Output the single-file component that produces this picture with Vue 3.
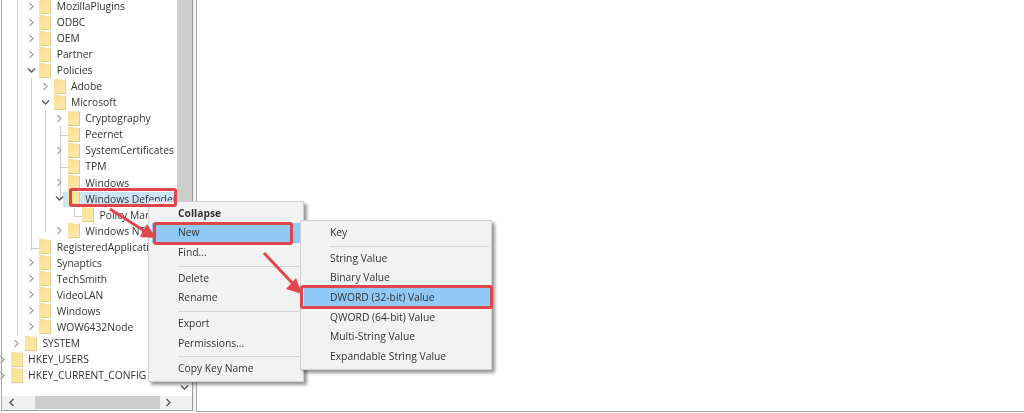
<script setup>
const rows = [
  { label: "MozillaPlugins", level: 2, exp: "closed" },
  { label: "ODBC", level: 2, exp: "closed" },
  { label: "OEM", level: 2, exp: "closed" },
  { label: "Partner", level: 2, exp: "closed" },
  { label: "Policies", level: 2, exp: "open" },
  { label: "Adobe", level: 3, exp: "closed" },
  { label: "Microsoft", level: 3, exp: "open" },
  { label: "Cryptography", level: 4, exp: "closed" },
  { label: "Peernet", level: 4 },
  { label: "SystemCertificates", level: 4, exp: "closed" },
  { label: "TPM", level: 4 },
  { label: "Windows", level: 4, exp: "closed" },
  { label: "Windows Defender", level: 4, exp: "open", selected: true },
  { label: "Policy Manager", level: 5 },
  { label: "Windows NT", level: 4, exp: "closed" },
  { label: "RegisteredApplications", level: 2 },
  { label: "Synaptics", level: 2, exp: "closed" },
  { label: "TechSmith", level: 2, exp: "closed" },
  { label: "VideoLAN", level: 2, exp: "closed" },
  { label: "Windows", level: 2, exp: "closed" },
  { label: "WOW6432Node", level: 2, exp: "closed" },
  { label: "SYSTEM", level: 1, exp: "closed" },
  { label: "HKEY_USERS", level: 0, exp: "closed" },
  { label: "HKEY_CURRENT_CONFIG", level: 0, exp: "closed" },
];

const indent = (level) => ({ paddingLeft: 10.6 + level * 14.3 + "px" });

// dotted tree guides, x1 y1 x2 y2
const guides = [
  [17, 0, 17, 336],
  [31, 78, 31, 249],
  [45, 110, 45, 232],
  [60, 126, 60, 200],
  [74, 208, 74, 216],
  [60, 135, 67, 135],
  [60, 167, 67, 167],
  [74, 216, 82, 216],
  [31, 248, 38, 248],
];

const mainMenu = [
  [{ label: "Collapse", bold: true }, { label: "New", active: true }, { label: "Find..." }],
  [{ label: "Delete" }, { label: "Rename" }],
  [{ label: "Export" }, { label: "Permissions..." }],
  [{ label: "Copy Key Name" }],
];

const subMenu = [
  [{ label: "Key" }],
  [
    { label: "String Value" },
    { label: "Binary Value" },
    { label: "DWORD (32-bit) Value", active: true },
    { label: "QWORD (64-bit) Value" },
    { label: "Multi-String Value" },
    { label: "Expandable String Value" },
  ],
];
</script>

<template>
  <div class="screen">
    <div class="left">
      <div class="tree-area">
        <div class="tree">
          <svg class="guides" width="176" height="340" viewBox="0 0 176 340">
            <line
              v-for="(g, i) in guides"
              :key="i"
              :x1="g[0] + 0.5"
              :y1="g[1] + 0.5"
              :x2="g[2] + 0.5"
              :y2="g[3] + 0.5"
              stroke="#9a9a9a"
              stroke-dasharray="1 1"
            />
          </svg>
          <div
            v-for="(row, i) in rows"
            :key="i"
            class="row"
            :class="{ selected: row.selected }"
            :style="indent(row.level)"
          >
            <span class="twisty">
              <svg v-if="row.exp === 'closed'" width="7" height="9" viewBox="0 0 7 9">
                <path d="M1.5 1 L5 4.5 L1.5 8" fill="none" stroke="#a6a6a6" stroke-width="1.3" />
              </svg>
              <svg v-if="row.exp === 'open'" width="9" height="7" viewBox="0 0 9 7">
                <path d="M1 1.5 L4.5 5 L8 1.5" fill="none" stroke="#555" stroke-width="1.3" />
              </svg>
            </span>
            <span class="folder"><span class="tab"></span></span>
            <span class="label">{{ row.label }}</span>
          </div>
        </div>
        <div class="vbar">
          <div class="vthumb"></div>
          <svg class="vdown" width="9" height="7" viewBox="0 0 9 7">
            <path d="M1 1.5 L4.5 5 L8 1.5" fill="none" stroke="#555" stroke-width="1.4" />
          </svg>
        </div>
      </div>
      <div class="hbar">
        <svg width="7" height="9" viewBox="0 0 7 9">
          <path d="M5.5 1 L2 4.5 L5.5 8" fill="none" stroke="#555" stroke-width="1.4" />
        </svg>
        <div class="hthumb"></div>
        <svg width="7" height="9" viewBox="0 0 7 9">
          <path d="M1.5 1 L5 4.5 L1.5 8" fill="none" stroke="#555" stroke-width="1.4" />
        </svg>
      </div>
    </div>
    <div class="splitter"></div>
    <div class="right"></div>

    <div class="menu main-menu">
      <div v-for="(group, g) in mainMenu" :key="g" class="group">
        <div
          v-for="item in group"
          :key="item.label"
          class="item"
          :class="{ bold: item.bold, active: item.active }"
        >
          {{ item.label }}
        </div>
      </div>
    </div>

    <div class="menu sub-menu">
      <div v-for="(group, g) in subMenu" :key="g" class="group">
        <div
          v-for="item in group"
          :key="item.label"
          class="item"
          :class="{ active: item.active }"
        >
          {{ item.label }}
        </div>
      </div>
    </div>

    <div class="mark mark-defender"></div>
    <div class="mark mark-new"></div>
    <div class="mark mark-dword"></div>

    <svg class="arrows" width="1024" height="413" viewBox="0 0 1024 413">
      <g fill="none" stroke="#e2474c" stroke-width="3">
        <path d="M110 209 L146 232" />
        <path d="M264 253 L296 287" />
      </g>
      <g fill="#e2474c">
        <path d="M156 238 L140 237 L147 224 Z" />
        <path d="M302 294 L286 289 L296 278 Z" />
      </g>
    </svg>
  </div>
</template>

<style scoped>
.screen {
  position: relative;
  width: 1024px;
  height: 413px;
  display: flex;
  overflow: hidden;
  background: #fff;
  font-family: "Open Sans", "Noto Sans", sans-serif;
  font-size: 10.3px;
  color: #333;
  filter: blur(0.3px);
}

.left {
  width: 192px;
  height: 411px;
  border-left: 1px solid #a5a5a5;
  border-right: 1px solid #9a9a9a;
  border-bottom: 1px solid #9a9a9a;
  margin-left: 1px;
  display: flex;
  flex-direction: column;
  box-sizing: border-box;
  flex: none;
}

.tree-area {
  flex: 1;
  display: flex;
  min-height: 0;
}

.tree {
  flex: 1;
  position: relative;
  margin-top: -2px;
  margin-left: -2px;
  min-width: 0;
  overflow: hidden;
}

.guides {
  position: absolute;
  left: 0;
  top: 2px;
}

.row {
  height: 16.05px;
  display: flex;
  align-items: center;
  white-space: nowrap;
  overflow: hidden;
  position: relative;
}

.row.selected::before {
  content: "";
  position: absolute;
  left: 63px;
  right: 0;
  top: 1px;
  bottom: -1px;
  background: #cce4f7;
}

.twisty {
  position: absolute;
  margin-left: -14px;
  width: 12px;
  display: flex;
  justify-content: center;
}

.folder {
  position: relative;
  width: 12px;
  height: 15px;
  margin-right: 5.5px;
  flex: none;
  background: linear-gradient(135deg, #f9df90, #fce9ac);
  border-right: 1px solid #e6cc84;
  border-bottom: 1px solid #e6cc84;
  box-sizing: border-box;
}

.tab {
  position: absolute;
  left: 5px;
  top: 0;
  right: -1px;
  height: 1px;
  background: #fdf6dc;
}

.label {
  position: relative;
}

.vbar {
  width: 15px;
  flex: none;
  position: relative;
  background: #fff;
}

.vthumb {
  position: absolute;
  top: 0;
  left: 0;
  right: 0;
  height: 378px;
  background: #cdcdcd;
}

.vdown {
  position: absolute;
  left: 3px;
  bottom: 5px;
}

.hbar {
  height: 13px;
  flex: none;
  display: flex;
  align-items: center;
  justify-content: space-between;
  padding: 0 20px 0 6px;
  background: #f0f0f0;
  margin-bottom: 1px;
}

.hthumb {
  width: 125px;
  height: 13px;
  background: #cdcdcd;
  margin: 0 3px 0 17px;
}

.splitter {
  width: 3px;
  height: 411px;
  flex: none;
  background: #f0f0f0;
}

.right {
  flex: 1;
  height: 412px;
  border-left: 1px solid #a9a9a9;
  border-bottom: 1px solid #a9a9a9;
  box-sizing: border-box;
}

.menu {
  position: absolute;
  background: #f2f2f2;
  border: 1px solid #d0d0d0;
  box-shadow: 3px 3px 3px rgba(0, 0, 0, 0.4);
  box-sizing: border-box;
}

.main-menu {
  left: 148px;
  top: 201px;
  width: 156px;
  height: 181px;
  padding-top: 1.5px;
}

.sub-menu {
  left: 300px;
  top: 220px;
  width: 192px;
  height: 150px;
  padding-top: 2px;
}

.group + .group {
  margin-top: 3px;
  padding-top: 3px;
  position: relative;
}

.group + .group::before {
  content: "";
  position: absolute;
  top: 0;
  right: 2px;
  height: 1px;
  left: 29px;
  background: #d4d4d4;
}

.item {
  height: 19.7px;
  line-height: 19.7px;
  padding-left: 29px;
}

.item.bold {
  font-weight: 700;
}

.item.active {
  background: #90c8f6;
  margin-left: 3px;
  padding-left: 26px;
}

.mark {
  position: absolute;
  border: 3px solid #de464c;
  border-radius: 3px;
  box-sizing: border-box;
}

.mark-defender {
  left: 69px;
  top: 188px;
  width: 108px;
  height: 19px;
}

.mark-new {
  left: 153px;
  top: 222px;
  width: 140px;
  height: 23px;
}

.mark-dword {
  left: 300px;
  top: 285px;
  width: 193px;
  height: 24px;
}

.arrows {
  position: absolute;
  left: 0;
  top: 0;
  pointer-events: none;
}
</style>
